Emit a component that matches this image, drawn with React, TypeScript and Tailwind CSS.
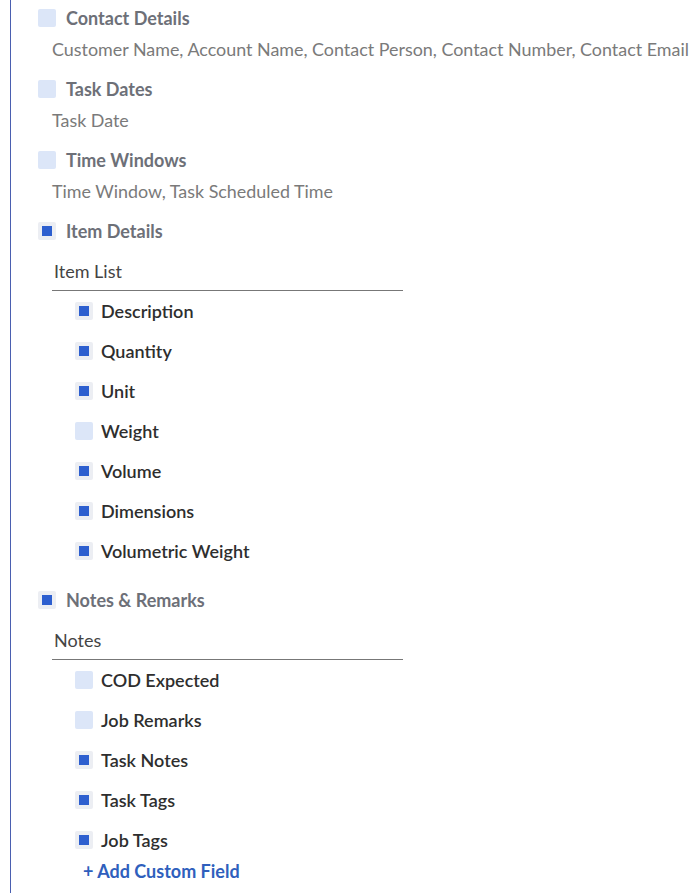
const groups = [
	{ title: "Contact Details", checked: false, sub: "Customer Name, Account Name, Contact Person, Contact Number, Contact Email" },
	{ title: "Task Dates", checked: false, sub: "Task Date" },
	{ title: "Time Windows", checked: false, sub: "Time Window, Task Scheduled Time" },
]

const itemFields = [
	{ label: "Description", checked: true },
	{ label: "Quantity", checked: true },
	{ label: "Unit", checked: true },
	{ label: "Weight", checked: false },
	{ label: "Volume", checked: true },
	{ label: "Dimensions", checked: true },
	{ label: "Volumetric Weight", checked: true },
]

const noteFields = [
	{ label: "COD Expected", checked: false },
	{ label: "Job Remarks", checked: false },
	{ label: "Task Notes", checked: true },
	{ label: "Task Tags", checked: true },
	{ label: "Job Tags", checked: true },
]

const Check = ({ checked }: { checked: boolean }) =>
	checked ? (
		<div className="w-[18px] h-[18px] rounded-[2px] bg-[#eceef3] flex items-center justify-center shrink-0">
			<div className="w-[10px] h-[10px] bg-[#2d5fcf]"></div>
		</div>
	) : (
		<div className="w-[18px] h-[18px] rounded-[2px] bg-[#dce6f8] shrink-0"></div>
	)

const Header = ({ title, checked }: { title: string; checked: boolean }) => (
	<div className="h-[36px] flex items-center gap-[10px] pl-[27px]">
		<Check checked={checked} />
		<span className="text-[18px] font-bold text-[#6d7078]">{title}</span>
	</div>
)

const Field = ({ label, checked }: { label: string; checked: boolean }) => (
	<div className="h-[40px] flex items-center gap-[8px] pl-[64px]">
		<Check checked={checked} />
		<span className="text-[18px] font-semibold text-[#2e2e2e]">{label}</span>
	</div>
)

const SubList = ({ label, fields }: { label: string; fields: { label: string; checked: boolean }[] }) => (
	<div className="mt-[8px]">
		<div className="ml-[41px] w-[351px] h-[34px] pl-[2px] pt-[1px] border-b border-[#777]">
			<div className="h-[26px] flex items-center text-[18px] text-[#444]">{label}</div>
		</div>
		{fields.map((f) => (
			<Field key={f.label} label={f.label} checked={f.checked} />
		))}
	</div>
)

export default function App() {
	return (
		<div className="w-[697px] h-[893px] bg-white pl-[10px] overflow-hidden" style={{ fontFamily: "Lato, 'Open Sans', sans-serif" }}>
			<div className="h-full border-l border-[#4a5fb0]">
				{groups.map((g) => (
					<div key={g.title} className="mb-[9px]">
						<Header title={g.title} checked={g.checked} />
						<div className="h-[26px] flex items-center pl-[41px] text-[17.9px] text-[#7a7a7a] whitespace-nowrap">{g.sub}</div>
					</div>
				))}
				<Header title="Item Details" checked />
				<SubList label="Item List" fields={itemFields} />
				<div className="mt-[11px]">
					<Header title="Notes & Remarks" checked />
				</div>
				<SubList label="Notes" fields={noteFields} />
				<div className="h-[22px] flex items-center pl-[72px] text-[18px] font-bold text-[#2f5fbd]">+ Add Custom Field</div>
			</div>
		</div>
	)
}
